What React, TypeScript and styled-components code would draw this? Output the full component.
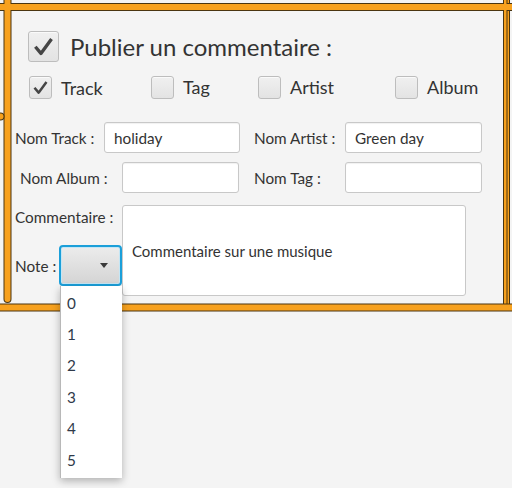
import styled, { createGlobalStyle } from 'styled-components';

const GlobalStyle = createGlobalStyle`
  html, body {
    margin: 0;
    padding: 0;
    background: #f4f4f4;
  }
  body {
    font-family: Lato, "Open Sans", sans-serif;
    color: #333333;
  }
`;

const Screen = styled.div`
  position: relative;
  width: 512px;
  height: 488px;
  overflow: hidden;
  background: #f4f4f4;
`;

const FrameLines = styled.svg`
  position: absolute;
  left: 0;
  top: 0;
  width: 512px;
  height: 320px;
  pointer-events: none;
`;

const Form = styled.div`
  position: relative;
  display: flex;
  flex-direction: column;
  padding: 31px 0 0 0;
`;

const Header = styled.label`
  display: flex;
  align-items: center;
  gap: 11px;
  margin-left: 28px;
  font-size: 24px;
`;

const Box = styled.span<{ $size: number }>`
  box-sizing: border-box;
  width: ${(p) => p.$size}px;
  height: ${(p) => p.$size}px;
  flex: none;
  border: 1px solid #bdbdbd;
  border-radius: 3px;
  background: linear-gradient(#f0f0f0, #e3e3e3);
  box-shadow: inset 0 1px 0 #fafafa;
  display: flex;
  align-items: center;
  justify-content: center;
`;

const ChoiceRow = styled.div`
  display: grid;
  grid-template-columns: 122px 107px 137px auto;
  margin: 13px 0 0 29px;
`;

const Choice = styled.label<{ $drop?: number }>`
  display: flex;
  align-items: center;
  gap: 9px;
  font-size: 18px;
  margin-top: ${(p) => p.$drop ?? 0}px;
`;

const FieldRow = styled.div<{ $top: number }>`
  display: flex;
  align-items: center;
  margin-top: ${(p) => p.$top}px;
  height: 31px;
`;

const Label = styled.span<{ $left: number; $width: number; $top?: number }>`
  font-size: 15.3px;
  margin-left: ${(p) => p.$left}px;
  margin-top: ${(p) => p.$top ?? 0}px;
  width: ${(p) => p.$width}px;
  flex: none;
  white-space: nowrap;
`;

const Field = styled.div<{ $width: number }>`
  box-sizing: border-box;
  width: ${(p) => p.$width}px;
  height: 31px;
  flex: none;
  background: #ffffff;
  border: 1px solid #c8c8c8;
  border-radius: 3px;
  box-shadow: inset 0 1px 1px rgba(0, 0, 0, 0.06);
  padding: 0 9px;
  display: flex;
  align-items: center;
  font-size: 15.3px;
`;

const Bottom = styled.div`
  display: grid;
  grid-template-columns: 122px 344px;
  margin-top: 12px;
`;

const LeftCol = styled.div`
  display: flex;
  flex-direction: column;
`;

const NoteRow = styled.div`
  position: relative;
  display: flex;
  align-items: center;
  margin-top: 19px;
`;

const TextArea = styled.div`
  box-sizing: border-box;
  height: 91px;
  background: #ffffff;
  border: 1px solid #c8c8c8;
  border-radius: 3px;
  padding: 0 9px;
  display: flex;
  align-items: center;
  font-size: 15px;
`;

const Combo = styled.div`
  box-sizing: border-box;
  width: 63px;
  height: 41px;
  flex: none;
  border: 2px solid #1b9fd9;
  border-radius: 4px;
  background: linear-gradient(#ececec, #d4d4d4);
  box-shadow: inset 0 0 0 1px #c4e6f5;
  display: flex;
  align-items: center;
  justify-content: flex-end;
  padding-right: 12px;
`;

const Arrow = styled.span`
  width: 0;
  height: 0;
  border-left: 4.5px solid transparent;
  border-right: 4.5px solid transparent;
  border-top: 5px solid #3a3a3a;
`;

const Popup = styled.ul`
  position: absolute;
  left: 60px;
  top: 41px;
  width: 61px;
  margin: 0;
  padding: 1px 0 3px;
  list-style: none;
  background: #ffffff;
  border-left: 1px solid #b8b8b8;
  box-shadow: 0 3px 8px rgba(0, 0, 0, 0.28);
`;

const Item = styled.li`
  height: 31.4px;
  padding-left: 6px;
  display: flex;
  align-items: center;
  font-size: 15.3px;
  color: #2f3a4a;
`;

const Check = ({ size }: { size: number }) => (
  <svg width={size * 0.72} height={size * 0.72} viewBox="0 0 20 20">
    <path d="M3 10.5 L8 16.5 L17.5 3.5" fill="none" stroke="#454545" strokeWidth="3" strokeLinejoin="round" />
  </svg>
);

const CheckBox = ({ size, checked }: { size: number; checked?: boolean }) => (
  <Box $size={size}>{checked && <Check size={size} />}</Box>
);

const App = () => {
  return (
    <Screen>
      <GlobalStyle />
      <FrameLines viewBox="0 0 512 320">
        <g strokeLinecap="round">
          <line x1="7.5" y1="-4" x2="7.5" y2="299" stroke="#4a3510" strokeWidth="8" />
          <line x1="7.5" y1="-4" x2="7.5" y2="299" stroke="#f7a11e" strokeWidth="6" />
          <line x1="-4" y1="116.5" x2="0.5" y2="116.5" stroke="#4a3510" strokeWidth="8" />
          <line x1="-4" y1="116.5" x2="0.5" y2="116.5" stroke="#f7a11e" strokeWidth="6" />
        </g>
        <rect x="503" y="0" width="7" height="308" fill="#4a3510" />
        <rect x="504" y="0" width="2.5" height="308" fill="#f7a11e" />
        <rect x="507.5" y="0" width="1.5" height="308" fill="#f7a11e" />
        <line x1="0" y1="307.5" x2="512" y2="307.5" stroke="#4a3510" strokeWidth="8" />
        <line x1="0" y1="307.5" x2="512" y2="307.5" stroke="#f7a11e" strokeWidth="6" />
        <line x1="0" y1="7" x2="512" y2="7" stroke="#4a3510" strokeWidth="8" />
        <line x1="0" y1="7" x2="512" y2="7" stroke="#f7a11e" strokeWidth="6" />
        <rect x="4.5" y="3" width="6" height="8" fill="#f7a11e" />
        <rect x="504" y="3" width="2.5" height="8" fill="#f7a11e" />
      </FrameLines>

      <Form>
        <Header>
          <CheckBox size={31} checked />
          Publier un commentaire :
        </Header>

        <ChoiceRow>
          <Choice $drop={1}>
            <CheckBox size={23} checked />
            Track
          </Choice>
          <Choice>
            <CheckBox size={23} />
            Tag
          </Choice>
          <Choice>
            <CheckBox size={23} />
            Artist
          </Choice>
          <Choice>
            <CheckBox size={23} />
            Album
          </Choice>
        </ChoiceRow>

        <FieldRow $top={23}>
          <Label $left={15} $width={89}>Nom Track :</Label>
          <Field $width={136}>holiday</Field>
          <Label $left={14} $width={91}>Nom Artist :</Label>
          <Field $width={137}>Green day</Field>
        </FieldRow>

        <FieldRow $top={9}>
          <Label $left={20} $width={102}>Nom Album :</Label>
          <Field $width={117}>{''}</Field>
          <Label $left={15} $width={91}>Nom Tag :</Label>
          <Field $width={137}>{''}</Field>
        </FieldRow>

        <Bottom>
          <LeftCol>
            <Label $left={15} $width={107} $top={3}>Commentaire :</Label>
            <NoteRow>
              <Label $left={15} $width={44}>Note :</Label>
              <Combo>
                <Arrow />
              </Combo>
              <Popup>
                {[0, 1, 2, 3, 4, 5].map((n) => (
                  <Item key={n}>{n}</Item>
                ))}
              </Popup>
            </NoteRow>
          </LeftCol>
          <TextArea>Commentaire sur une musique</TextArea>
        </Bottom>
      </Form>
    </Screen>
  );
};

export default App;
